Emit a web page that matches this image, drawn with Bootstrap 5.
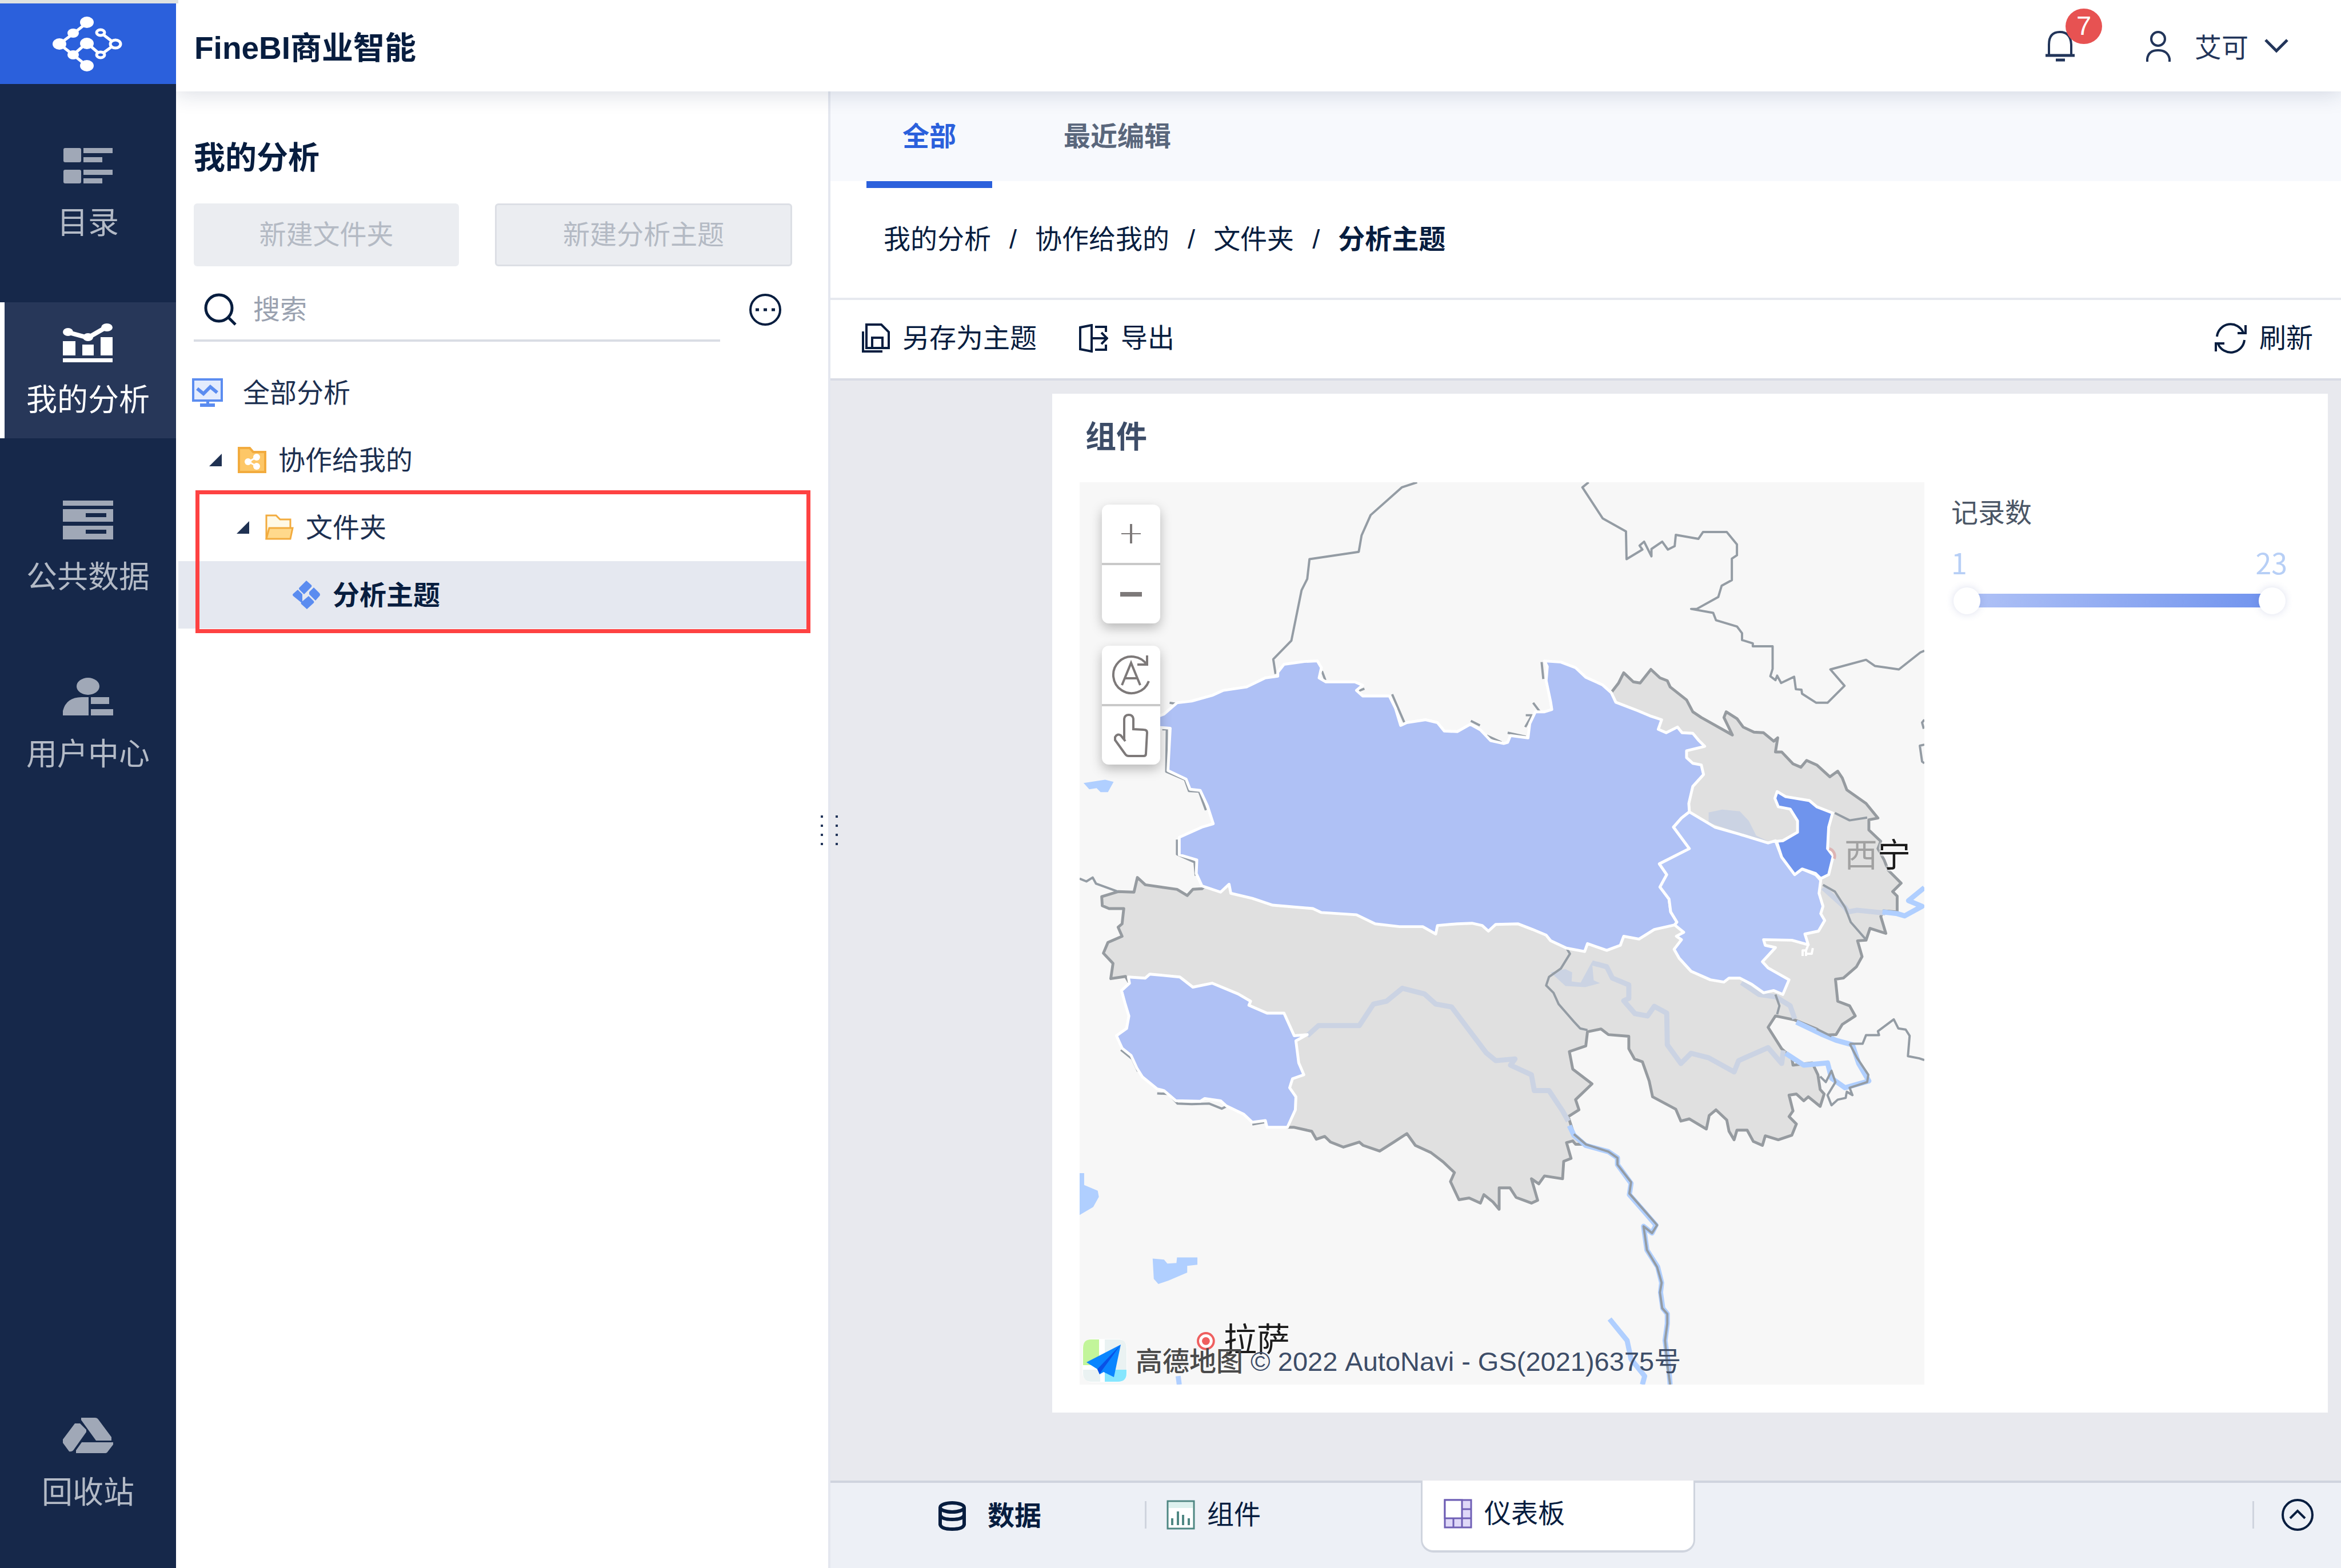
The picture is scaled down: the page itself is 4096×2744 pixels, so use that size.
<!DOCTYPE html>
<html lang="zh-CN">
<head>
<meta charset="utf-8">
<meta name="viewport" content="width=device-width, initial-scale=1">
<title>FineBI商业智能</title>
<link href="https://cdn.jsdelivr.net/npm/bootstrap@5.3.0/dist/css/bootstrap.min.css" rel="stylesheet">
<style>
  :root { --ink:#071d3f; --navy:#16284a; --blue:#2b60dc; --line:#e6e9ef; }
  body { font-family:"Liberation Sans","Noto Sans CJK SC",sans-serif; font-size:47px; line-height:60px; color:var(--ink); background:#fff; overflow:hidden; }
  svg { display:block; flex:none; }
  button { font:inherit; color:inherit; background:none; border:0; padding:0; }
  a { color:inherit; text-decoration:none; }
  .ic { fill:none; stroke:currentColor; stroke-width:4; }

  .rail { width:308px; flex:none; background:var(--navy); color:#b3bac6; z-index:5; }
  .rail-strip { height:6px; background:#dfe2e1; margin-right:-4px; }
  .rail-logo { height:141px; background:var(--blue); }
  .rail-nav { padding-top:72px; gap:72px; }
  .rail-link { height:238px; padding-top:35px; gap:34px; font-size:54px; border-left:8px solid transparent; border-right:8px solid transparent; white-space:nowrap; }
  .rail-link.active { background:#273759; color:#fff; border-left-color:#fff; border-right-color:#273759; }
  .rail-foot { padding-bottom:65px; }

  .topbar { height:160px; flex:none; background:#fff; box-shadow:0 4px 36px rgba(20,40,80,.16); z-index:3; padding:8px 92px 0 32px; }
  .brand { font-size:55px; font-weight:700; }
  .bell { margin-right:125px; color:#22355a; }
  .bell-count { left:35px; top:-39px; width:64px; height:62px; border-radius:50%; background:#e75252; color:#fff; font-size:47px; line-height:60px; }
  .topbar > button { margin-bottom:6px; }
  .user { gap:42px; color:#22355a; }
  .user-name { margin:6px -14px 0 0; }

  .side { width:1145px; flex:none; border-right:4px solid #e4e7ef; padding-top:86px; }
  .side-head { padding-left:31px; }
  .side h1 { font-size:55px; line-height:60px; font-weight:700; margin:0 0 50px; }
  .new-btn { height:110px; border-radius:6px; background:#ebedf1; border:3px solid #ebedf1; color:#b4bac4; }
  .new-btn.wide { border-color:#dcdfe5; }
  .w-a { width:464px; margin-right:63px; }
  .w-b { width:520px; }
  .finder { width:921px; height:108px; border-bottom:4px solid #d9dde4; padding-left:18px; gap:26px; margin-right:51px; }
  .finder input { border:0; outline:0; background:none; width:100%; color:var(--ink); }
  .finder input::placeholder { color:#9aa2b0; opacity:1; }
  .more { margin-bottom:28px; }
  .tree { margin:30px 31px 0 4px; color:#1c2f50; }
  .node { height:118px; }
  .node span { padding-top:2px; }
  .node.l0 { padding-left:24px; gap:35px; }
  .node.l1 { padding-left:54px; }
  .node.l2 { padding-left:102px; }
  .node.l3 { padding-left:199px; background:#e5e8f0; color:var(--ink); font-weight:700; }
  .twig { width:22px; height:22px; margin-right:28px; background:#1f3152; clip-path:polygon(100% 0,100% 100%,0 100%); flex:none; }
  .node-text { margin-left:21px; }
  .hilite { left:30px; top:230px; right:0; height:250px; border:7px solid #fe4242; pointer-events:none; }
  .grip { right:-17px; top:1267px; width:30px; z-index:2; }

  .tabs { height:157px; flex:none; background:#f7f9fd; padding-left:63px; gap:62px; font-weight:700; color:#5a677c; }
  .tabs button { padding:0 63px; position:relative; font-weight:700; }
  .tabs .on { color:var(--blue); }
  .tabs .on::after { content:""; position:absolute; left:0; right:0; bottom:-12px; height:12px; background:var(--blue); }
  .crumbs { height:208px; flex:none; border-bottom:4px solid var(--line); padding-left:93px; }
  .breadcrumb { --bs-breadcrumb-item-padding-x:32px; --bs-breadcrumb-divider-color:var(--ink); --bs-breadcrumb-item-active-color:var(--ink); --bs-breadcrumb-font-size:47px; margin:0; }
  .breadcrumb-item::before { font-weight:400; }
  .tools { height:141px; flex:none; border-bottom:4px solid #d9dce5; padding:0 49px 3px 55px; gap:74px; }
  .tools button { gap:22px; }

  .canvas { background:#e8e9ee; padding:23px 23px 119px 388px; min-height:0; }
  .board { background:#fff; padding:0 74px 49px 48px; height:100%; }
  .board h2 { font-size:54px; line-height:152px; font-weight:700; color:#3d4d68; margin:0; padding:0 0 3px 10px; }
  .map { width:1478px; flex:none; background:#f7f7f7; overflow:hidden; }
  .map-btns { left:39px; width:102px; border-radius:12px; background:#fff; box-shadow:0 8px 20px rgba(0,0,0,.26); color:#7d7979; }
  .map-btns button { height:102px; width:100%; }
  .map-btns button + button { border-top:4px solid #c9c9c9; height:106px; }
  .zoomers { top:39px; } .movers { top:286px; }
  .city { font-size:58px; line-height:70px; color:#1c1c1c; text-shadow:0 0 4px #fff,0 0 4px #fff,0 0 4px #fff; white-space:nowrap; }
  .xining { left:1338px; top:618px; } .xining span { color:#a1a1a1; text-shadow:none; }
  .lhasa { left:252px; top:1466px; }
  .credit { left:5px; bottom:4px; gap:15px; color:#3d4d68; white-space:nowrap; }
  .credit div { padding-top:4px; }
  .credit b { font-weight:500; color:#4a4a4a; }
  .legend { padding:24px 0 0 47px; color:#4b5666; }
  .ends { color:#b7cff6; font-size:50px; line-height:50px; padding:30px 0 4px; font-family:"Noto Sans CJK SC",sans-serif; margin-right:-3px; }
  .span-box { height:47px; margin:16px 0 0 4px; }
  .span-box::before { content:""; position:absolute; left:23px; right:23px; top:11px; height:24px; background:linear-gradient(90deg,#b0c2f6,#7093ee); }
  .span-box input { position:absolute; left:0; top:0; width:100%; height:47px; margin:0; appearance:none; background:none; pointer-events:none; }
  .span-box input::-webkit-slider-thumb { appearance:none; width:47px; height:47px; border-radius:50%; background:#fff; box-shadow:0 0 14px rgba(60,80,160,.18); pointer-events:auto; }

  .dock { height:153px; flex:none; background:#edf0f6; border-top:4px solid #cfd4de; padding:0 48px 0 188px; }
  .dock > * { height:112px; }
  .dock .bar { width:3px; height:48px; background:#cfd4de; margin-top:32px; }
  .dock .data { gap:37px; margin-right:181px; font-weight:700; padding-top:4px; }
  .dock .parts { gap:21px; margin:0 280px 0 35px; }
  .dock .dash { width:480px; height:126px; margin-top:-4px; padding:0 0 6px 37px; gap:21px; background:#fff; border:solid #cfd4de; border-width:0 3px 4px; border-radius:0 0 22px 22px; }
</style>
<script src="https://cdn.jsdelivr.net/npm/bootstrap@5.3.0/dist/js/bootstrap.bundle.min.js"></script>
</head>
<body>
<div class="d-flex vh-100">

  <aside class="rail d-flex flex-column position-relative">
    <div class="rail-strip"></div>
    <a href="#" class="rail-logo d-flex justify-content-center align-items-center" aria-label="FineBI">
      <svg width="124" height="98" viewBox="0 0 124 98" fill="#fff" stroke="#fff" stroke-width="5">
        <path fill="none" d="M60 12 36 31 12 49 36 68 60 87M36 68 60 47 84 68 110 49 84 29"/>
        <g stroke="none"><ellipse cx="60" cy="11" rx="12" ry="10"/><ellipse cx="36" cy="30" rx="10" ry="8"/><ellipse cx="12" cy="49" rx="12" ry="10"/><ellipse cx="36" cy="68" rx="10" ry="8"/><ellipse cx="60" cy="87" rx="12" ry="10"/><ellipse cx="60" cy="48" rx="12" ry="10"/></g>
        <g fill="#2b60dc"><ellipse cx="84" cy="29" rx="7" ry="5"/><ellipse cx="110" cy="49" rx="9" ry="7"/><ellipse cx="84" cy="68" rx="7" ry="5"/></g>
      </svg>
    </a>
    <nav class="rail-nav d-flex flex-column flex-grow-1">
      <a href="#" class="rail-link d-flex flex-column align-items-center">
        <svg width="90" height="72" viewBox="0 0 90 72" fill="#a0a8b7"><rect x="2" y="5" width="31" height="25" rx="3"/><rect x="37" y="5" width="51" height="9"/><rect x="37" y="21" width="33" height="9"/><rect x="2" y="43" width="31" height="24" rx="3"/><rect x="37" y="43" width="51" height="9"/><rect x="37" y="58" width="33" height="9"/></svg>
        <span>目录</span>
      </a>
      <a href="#" class="rail-link active d-flex flex-column align-items-center">
        <svg width="90" height="72" viewBox="0 0 90 72" fill="#fff"><rect x="1" y="33" width="22" height="25"/><rect x="35" y="39" width="20" height="19"/><rect x="67" y="26" width="21" height="32"/><rect x="1" y="63" width="87" height="7"/><path d="M8 17 45 27 78 8" fill="none" stroke="#fff" stroke-width="8"/><ellipse cx="10" cy="17" rx="9" ry="7"/><ellipse cx="45" cy="26" rx="9" ry="7"/><ellipse cx="78" cy="9" rx="10" ry="7"/></svg>
        <span>我的分析</span>
      </a>
      <a href="#" class="rail-link d-flex flex-column align-items-center">
        <svg width="90" height="72" viewBox="0 0 90 72" fill="#a0a8b7"><path d="M1 2h88v9H1zM1 17h88v22H1zm40 7v7h36v-7zM1 46h88v24H1zm40 7v7h36v-7z" fill-rule="evenodd"/></svg>
        <span>公共数据</span>
      </a>
      <a href="#" class="rail-link d-flex flex-column align-items-center">
        <svg width="90" height="72" viewBox="0 0 90 72" fill="#a0a8b7"><ellipse cx="45" cy="17" rx="20" ry="15"/><path d="M46 36v32H1V60Q7 36 34 36zM50 36h32v12H50zM50 57h39v11H50z"/></svg>
        <span>用户中心</span>
      </a>
    </nav>
    <div class="rail-foot">
      <a href="#" class="rail-link d-flex flex-column align-items-center">
        <svg width="90" height="72" viewBox="0 0 90 72" fill="#a0a8b7"><path d="M33 5 57 5Q61 5 63 8L86 39V45H59L33 9ZM22 15H31L42 26V30L20 61Q17 65 12 64L1 49V43ZM34 48H89V52L79 65Q78 67 74 67H24V62Z"/></svg>
        <span>回收站</span>
      </a>
    </div>
  </aside>

  <div class="d-flex flex-column flex-grow-1">
    <header class="topbar d-flex align-items-center position-relative">
      <div class="brand">FineBI商业智能</div>
      <button class="bell position-relative ms-auto" aria-label="消息">
        <svg class="ic" width="51" height="54" viewBox="0 0 51 54"><path d="M6 42V24Q6 2 25 2T45 24V42" /><path d="M0 43H51M18 51H34" stroke-width="5"/></svg>
        <span class="bell-count position-absolute text-center">7</span>
      </button>
      <button class="user d-flex align-items-center" aria-label="艾可">
        <svg class="ic" width="43" height="54" viewBox="0 0 43 54"><circle cx="21" cy="14" r="12"/><path d="M2 54V49Q4 34 21 34T41 49V54"/></svg>
        <span class="user-name">艾可</span>
        <svg class="ic" width="42" height="26" viewBox="0 0 42 26"><path d="M2 2 21 21 40 2" stroke-width="5"/></svg>
      </button>
    </header>

    <div class="d-flex flex-grow-1" style="min-height:0">
      <section class="side position-relative">
        <div class="side-head">
          <h1>我的分析</h1>
          <div class="d-flex">
            <button class="new-btn w-a" disabled>新建文件夹</button>
            <button class="new-btn wide w-b" disabled>新建分析主题</button>
          </div>
          <div class="d-flex align-items-end pt-4">
            <label class="finder d-flex align-items-center">
              <svg class="ic" width="58" height="58" viewBox="0 0 58 58" style="stroke-width:5"><circle cx="26" cy="26" r="23"/><path d="M42 42 55 55"/></svg>
              <input type="text" placeholder="搜索" aria-label="搜索">
            </label>
            <button aria-label="更多" class="more">
              <svg class="ic" width="56" height="56" viewBox="0 0 56 56"><circle cx="28" cy="28" r="26"/><path d="M11 28H17M25 28H31M39 28H45" stroke-width="5"/></svg>
            </button>
          </div>
        </div>
        <div class="tree position-relative">
          <a href="#" class="node l0 d-flex align-items-center">
            <svg width="54" height="50" viewBox="0 0 54 50"><rect x="2" y="2" width="50" height="37" fill="#e4ecfd" stroke="#5b8cf0" stroke-width="4"/><path d="M9 18 20 27 32 15 44 25" fill="none" stroke="#5b8cf0" stroke-width="6"/><path d="M25 40h5v4h10v6H14v-6h11z" fill="#5b8cf0"/></svg>
            <span>全部分析</span>
          </a>
          <a href="#" class="node l1 d-flex align-items-center">
            <i class="twig"></i>
            <svg width="50" height="46" viewBox="0 0 50 46"><path d="M2 2H21L27 9H48V44H2Z" fill="#fdc767" stroke="#f2ab3e" stroke-width="4"/><path d="M33 18 19 26 33 34" fill="none" stroke="#fff" stroke-width="3"/><g fill="#fff"><circle cx="18" cy="26" r="6"/><circle cx="33" cy="18" r="6"/><circle cx="33" cy="34" r="6"/></g></svg>
            <span class="node-text">协作给我的</span>
          </a>
          <a href="#" class="node l2 d-flex align-items-center">
            <i class="twig"></i>
            <svg width="50" height="46" viewBox="0 0 50 46" stroke="#f2ab3e" stroke-width="3"><path d="M2 43V2H19L26 9H44V24" fill="#fff9e6"/><path d="M7 24H48L44 43H2Z" fill="#ffd98c"/></svg>
            <span class="node-text">文件夹</span>
          </a>
          <a href="#" class="node l3 d-flex align-items-center">
            <svg width="50" height="50" viewBox="0 0 50 50" fill="#5b8cf0"><path d="M25 0 34 8Q35 10 34 11L21 24 13 16Q11 14 13 12ZM10 16 18 24V40L2 27Q0 25 2 23ZM38 12 48 22Q50 25 48 27L41 35 30 24V20ZM29 27 38 36Q39 38 38 39L26 50 16 41Q15 40 16 38Z"/></svg>
            <span class="node-text">分析主题</span>
          </a>
          <div class="hilite position-absolute"></div>
        </div>
        <div class="grip position-absolute">
          <svg width="30" height="54" viewBox="0 0 30 54" fill="#22355a"><path d="M0 0h4v4H0zM26 0h4v4h-4zM0 16h4v4H0zM26 16h4v4h-4zM0 32h4v4H0zM26 32h4v4h-4zM0 48h4v4H0zM26 48h4v4h-4z"/></svg>
        </div>
      </section>

      <main class="d-flex flex-column flex-grow-1">
        <div class="tabs d-flex">
          <button class="on">全部</button>
          <button>最近编辑</button>
        </div>
        <nav class="crumbs d-flex align-items-center" aria-label="breadcrumb">
          <ol class="breadcrumb">
            <li class="breadcrumb-item"><a href="#">我的分析</a></li>
            <li class="breadcrumb-item"><a href="#">协作给我的</a></li>
            <li class="breadcrumb-item"><a href="#">文件夹</a></li>
            <li class="breadcrumb-item active" aria-current="page"><strong>分析主题</strong></li>
          </ol>
        </nav>
        <div class="tools d-flex align-items-center">
          <button class="d-flex align-items-center">
            <svg class="ic" width="49" height="52" viewBox="0 0 49 52"><path d="M8 2H34L47 15V43H8ZM18 43V25H36V43M2 14V49H36"/></svg>另存为主题
          </button>
          <button class="d-flex align-items-center">
            <svg class="ic" width="51" height="50" viewBox="0 0 51 50"><path d="M22 2 2 6V44L22 48ZM28 5H47V14M28 45H47V36M24 25H48M39 15 49 25 39 35"/></svg>导出
          </button>
          <button class="d-flex align-items-center ms-auto">
            <svg class="ic" width="56" height="54" viewBox="0 0 56 54"><path d="M4 24A24 24 0 0 1 50 17M52 30A24 24 0 0 1 6 37M54 4V18H40M2 50V36H17"/></svg>刷新
          </button>
        </div>

        <div class="canvas flex-grow-1">
          <div class="board d-flex flex-column">
            <h2>组件</h2>
            <div class="d-flex flex-grow-1">
              <div class="map position-relative">
                <svg class="position-absolute top-0 start-0 w-100 h-100" viewBox="1907 852 1492 1596" preserveAspectRatio="none" fill="none" stroke-linejoin="round">
                  <!-- lakes and rivers beyond the province -->
                  <g fill="#b0cfff"><path d="M1914 1384 1952 1378 1967 1382 1957 1400H1944L1937 1393 1924 1395ZM1907 2074H1915V2095L1939 2105 1941 2116 1931 2134 1907 2148ZM2036 2225 2056 2227 2062 2234 2078 2233 2079 2223H2115V2236L2097 2238V2250L2064 2264 2046 2270 2038 2261Z"/></g>
                  <!-- province -->
                  <path fill="#e0e0e0" stroke="#969ba0" stroke-width="5" d="M2846 1224 2859 1207 2868 1189 2885 1205 2897 1207 2916 1183 2932 1198 2945 1203 2950 1214 2979 1237 2990 1258 3005 1268 3060 1299 3045 1268 3049 1258 3068 1270 3079 1285 3098 1294 3115 1295 3133 1310 3140 1304 3136 1329 3147 1329 3167 1350 3181 1356 3191 1344 3209 1352 3232 1373 3246 1363 3254 1375 3262 1396 3296 1420 3317 1446 3301 1449V1467L3322 1487 3317 1500 3328 1520 3335 1538 3358 1561 3343 1576 3351 1584V1612L3327 1610 3322 1620 3331 1650 3303 1641 3296 1662 3281 1663 3289 1691 3279 1709 3256 1729 3242 1731 3246 1770 3267 1778 3277 1796 3254 1811 3243 1829 3222 1830 3209 1819 3170 1803 3136 1796 3123 1816 3147 1854 3165 1870 3167 1883 3201 1879 3211 1900 3215 1926 3222 1934 3215 1956 3194 1939 3186 1946 3173 1934 3160 1936 3167 1964 3160 1974 3173 1987 3165 2007 3141 2015 3118 2008 3113 2025 3097 2018 3086 1998H3068L3063 2015 3054 2000 3050 1980 3031 1962 3019 1972 3014 1996 2984 1978 2969 1982 2960 1961 2919 1939 2913 1911 2901 1877 2887 1872 2877 1854V1832L2841 1829 2828 1819 2804 1824 2801 1849 2772 1859 2778 1890 2812 1916 2783 1944 2789 1962 2770 1974 2780 2005 2801 2023H2783L2778 2017 2767 2020 2775 2048 2762 2053 2760 2084 2728 2079 2718 2093 2705 2084 2716 2122 2705 2127 2678 2117 2667 2100H2648V2138L2637 2125 2621 2112 2615 2127 2595 2118 2577 2121 2562 2089 2569 2073 2549 2054 2528 2038 2500 2025 2485 2004 2462 2019 2437 2035 2408 2025 2401 2019 2373 2028 2350 2019 2340 2009 2325 2014 2317 2000 2286 1993 2274 1993 2150 1850 2020 1780 1988 1726 1962 1730 1966 1703 1949 1685 1957 1666 1982 1655 1975 1639 1982 1633 1985 1606H1959L1947 1601 1946 1585 1975 1576 2003 1577 2009 1551 2023 1564 2079 1572 2097 1583 2107 1572 2123 1571 2200 1500 2800 1400Z"/>
                  <!-- water inside the province -->
                  <g fill="#cbd3e3"><path d="M3018 1436 3042 1431 3073 1434 3089 1451 3102 1477 3123 1487 3071 1472 3018 1454ZM2739 1719 2765 1713 2777 1719 2776 1735 2792 1737 2812 1700 2815 1733 2826 1738 2800 1745 2765 1743Z"/></g>
                  <g stroke="#cbd3e3" stroke-width="9"><path d="M2309 1831 2329 1813H2401L2426 1775 2449 1770 2477 1747 2516 1757 2536 1775 2564 1780 2625 1861 2642 1875 2676 1872 2668 1883 2705 1900 2710 1928H2736L2760 1964 2770 1982M2812 1702 2838 1709 2848 1729 2877 1741V1765L2868 1769 2888 1792 2910 1796 2922 1779 2944 1791 2945 1847 2969 1880 2987 1862 3018 1870 3063 1895 3071 1875 3123 1852 3147 1880 3150 1857M3220 1569 3259 1604 3264 1612 3280 1609 3330 1614M3076 1737 3107 1758 3136 1762 3162 1778 3170 1801"/></g>
                  <g stroke="#b0cfff" stroke-width="9"><path d="M3325 1612 3351 1615 3364 1619 3395 1602 3371 1592 3399 1569M3173 1807 3217 1828 3243 1839 3272 1847 3283 1880 3301 1911 3259 1923 3235 1906 3228 1879 3186 1883 3154 1862M2772 1990 2780 2007 2801 2025 2841 2036 2857 2047V2059L2881 2092 2878 2112 2925 2166 2918 2180 2903 2168 2909 2210 2928 2240 2935 2268 2933 2285 2937 2313 2945 2323V2340L2941 2370 2947 2413 2950 2448M2843 2332 2874 2370 2881 2403 2905 2433 2901 2448M2081 2433 2083 2448"/></g>
                  <!-- neighbouring borders -->
                  <g stroke="#949ca4" stroke-width="4"><path d="M2503 852 2476 861 2421 910 2405 946 2400 975 2313 988 2309 1023 2299 1043 2281 1132 2249 1165 2253 1191M2806 852 2795 861 2831 916 2872 939 2873 988 2901 971 2896 964 2904 957 2917 983V970L2936 957 2946 971 2958 965 2960 945 3000 952 3008 940H3050L3068 962V981L3059 987V1025L3041 1035 3035 1055 2997 1076H2987L3026 1083 3031 1096 3068 1107 3077 1119V1131L3096 1137V1142H3131V1182L3127 1195 3136 1202 3139 1194 3146 1207 3169 1196 3172 1218 3182 1219 3183 1226 3208 1242H3228L3258 1212 3233 1183 3296 1166 3312 1177 3354 1183 3392 1153 3399 1150M3399 1272 3395 1277 3398 1288M3399 1316 3391 1318 3395 1346 3399 1349M1907 1553 1919 1558 1930 1551 1936 1562 1975 1576M2767 1676 2773 1686 2757 1712 2736 1727 2731 1742 2744 1755 2753 1775 2780 1806 2791 1818 2804 1821M3241 1437 3267 1450 3298 1445M3220 1564 3241 1576 3259 1604 3269 1630 3296 1661M3136 1758 3143 1778 3139 1793M3209 1819 3235 1832M3267 1845 3280 1870 3300 1900 3298 1913 3267 1923 3272 1936 3262 1930 3260 1941 3246 1944 3235 1954 3228 1936 3242 1913 3235 1893 3225 1913 3215 1903M3267 1845H3290L3296 1830H3319L3317 1823 3345 1802 3353 1818 3366 1820 3373 1831 3370 1867 3390 1871 3399 1874M2780 2005 2801 2023 2841 2036 2857 2047V2059L2881 2090 2878 2110 2927 2166 2918 2180 2903 2168 2909 2210 2927 2240 2935 2268 2932 2285 2936 2313 2945 2323V2340L2941 2370 2945 2413 2950 2448"/></g>
                  <g stroke="#949ca4" stroke-width="4"><path d="M2459 1227 2481 1278M2335 1186 2341 1202M2400 1221 2410 1217M2598 1274 2614 1282M2626 1300 2652 1312M2066 1242 2078 1244M2053 1289H2061L2060 1364 2093 1378 2100 1398 2118 1399 2130 1432M2723 1170 2726 1200M2708 1242 2720 1258M2695 1264H2706L2694 1285M2663 1295 2695 1302M2079 1484V1510L2110 1524 2112 1548M2044 1933 2064 1934 2080 1951 2105 1952 2136 1951 2158 1960 2166 1956M2212 1988 2233 1984M1980 1856 2000 1872 2010 1894"/></g>
                  <!-- data regions -->
                  <g stroke="#fff" stroke-width="5">
                    <path fill="#afc1f5" d="M2040 1268 2056 1262 2079 1242 2105 1239 2141 1229 2161 1220 2202 1214 2235 1198 2257 1195V1188L2268 1174 2304 1169 2327 1168 2334 1180 2330 1198 2342 1205H2393L2407 1211 2396 1220 2407 1230H2454L2465 1252 2474 1282 2485 1277 2518 1272 2539 1277 2551 1292 2574 1293 2597 1280 2615 1290 2633 1309 2656 1314 2663 1312 2668 1300 2699 1304 2702 1279 2712 1258H2728L2741 1254 2739 1241 2731 1203 2733 1178 2728 1168 2757 1170 2783 1180 2801 1197 2830 1210 2846 1224 2854 1241 2893 1256 2914 1265 2935 1272 2929 1289 2943 1295 2963 1285 2971 1295 2990 1296 3000 1308 3011 1319 2979 1327V1339L2990 1349 3005 1352 3009 1369 2990 1390 2983 1420 2984 1435 2970 1446 2956 1462 2984 1500 2931 1527 2944 1546 2932 1568 2948 1589 2951 1612 2962 1630 2958 1635 2922 1643 2895 1660 2868 1655 2862 1671 2838 1680 2804 1668 2799 1682 2767 1676 2739 1663 2731 1653 2707 1643 2681 1633 2642 1634 2629 1646 2618 1636 2600 1632 2574 1633 2539 1636 2536 1651 2513 1638H2472L2429 1633 2396 1617 2334 1613 2319 1606 2248 1600 2212 1588 2174 1579 2171 1563 2156 1577 2123 1566 2113 1544 2114 1520 2083 1511V1480L2123 1462 2143 1456 2133 1425 2120 1397 2102 1395 2095 1377 2063 1362 2067 1287 2040 1285Z"/>
                    <path fill="#b4c6f7" d="M2984 1435 3029 1462 3071 1474 3123 1490 3136 1486 3147 1515 3170 1546 3183 1536 3207 1546 3216 1556 3213 1579 3220 1602 3216 1615 3223 1627 3212 1646 3188 1651 3194 1670 3165 1662 3115 1661 3118 1671 3136 1675 3113 1700 3123 1711 3160 1732 3149 1758 3133 1751 3115 1755 3094 1740 3073 1729H3054L3045 1736 3021 1732 2987 1717 2966 1694 2957 1678 2970 1661 2961 1655 2974 1648 2958 1635 2962 1630 2951 1612 2948 1589 2932 1568 2944 1546 2931 1527 2984 1500 2956 1462 2970 1446Z"/>
                    <path stroke-width="4" d="M3184 1690V1680H3190V1690M3190 1680 3194 1670M3192 1686H3200L3202 1676"/>
                    <path fill="#6f94ed" d="M3139 1399 3154 1408 3196 1415 3209 1426 3237 1437 3230 1462 3228 1500 3238 1513 3230 1546 3216 1553 3207 1544 3183 1536 3170 1546 3147 1515 3138 1487 3149 1486 3175 1471V1451L3162 1430 3141 1426 3135 1411Z"/>
                    <path fill="#afc1f5" d="M1993 1727 2023 1729 2031 1722 2084 1727 2107 1745 2141 1738 2187 1757 2209 1770 2206 1777 2238 1791H2268L2286 1831 2309 1829 2289 1840 2294 1879 2303 1900 2283 1907 2278 1923 2289 1939 2288 1962 2274 1993H2238L2235 1981 2212 1984 2197 1970 2166 1955 2156 1946 2128 1942 2120 1947 2077 1946 2056 1928 2044 1925 2018 1904 2008 1888 1998 1866 1982 1853 1972 1831 1990 1818 1994 1796 1987 1773 1981 1751 1995 1738Z"/>
                  </g>
                  <path d="M3231 1500A14 14 0 0 1 3240 1518" stroke="#ddb4b4" stroke-width="5"/>
                  <g stroke="#ef5f5f" stroke-width="4"><circle cx="2130" cy="2371" r="14" fill="#fff"/><circle cx="2130" cy="2371" r="5" fill="#ef5f5f"/></g>
                </svg>
                <div class="xining city position-absolute"><span>西</span>宁</div>
                <div class="lhasa city position-absolute">拉萨</div>
                <div class="credit position-absolute d-flex align-items-center">
                  <svg width="78" height="76" viewBox="0 0 78 76"><rect width="78" height="76" rx="16" fill="#fff"/><path d="M15 1H29V46H1V16Q1 1 15 1Z" fill="#c2f59a"/><path d="M39 1H62Q77 1 77 16V54H39Z" fill="#eaf2f2"/><path d="M1 54H31V75H16Q1 75 1 60Z" fill="#eaf2f2"/><path d="M39 54H77V60Q77 75 62 75H39Z" fill="#86e6fe"/><path d="M67 10 7 41 26 53 30 62 37 58 55 67Z" fill="#0a85ff"/><path d="M67 10 26 53 30 62 35 54Z" fill="#0a52e6"/></svg>
                  <div><b>高德地图</b> © 2022 AutoNavi - GS(2021)6375号</div>
                </div>
                <div class="map-btns zoomers position-absolute">
                  <button class="d-flex align-items-center justify-content-center" aria-label="放大"><svg class="ic" width="34" height="34" viewBox="0 0 34 34"><path d="M17 0V34" /><path d="M0 17H34" stroke-width="2"/></svg></button>
                  <button class="d-flex align-items-center justify-content-center" aria-label="缩小"><svg width="38" height="8" viewBox="0 0 38 8"><rect width="38" height="8" fill="#7d7979"/></svg></button>
                </div>
                <div class="map-btns movers position-absolute">
                  <button class="d-flex align-items-center justify-content-center" aria-label="还原"><svg class="ic" width="68" height="70" viewBox="0 0 68 70"><path d="M62 18A32 32 0 1 0 65 46M62 1V17H45M18 53 34 14 50 53M23 41H45" stroke-width="4"/></svg></button>
                  <button class="d-flex align-items-center justify-content-center" aria-label="拖动"><svg class="ic" width="60" height="76" viewBox="0 0 60 76"><path d="M20 48 12 38Q6 34 2 41V46L20 71Q22 74 26 74H52Q56 74 56 70L58 33Q58 28 52 28L34 27V9Q33 2 26 2T18 9V46"/></svg></button>
                </div>
              </div>

              <div class="legend flex-grow-1">
                <div>记录数</div>
                <div class="ends d-flex justify-content-between"><span>1</span><span>23</span></div>
                <div class="span-box position-relative">
                  <input type="range" min="1" max="23" value="1" aria-label="最小值">
                  <input type="range" min="1" max="23" value="23" aria-label="最大值">
                </div>
              </div>
            </div>
          </div>
        </div>

        <div class="dock d-flex">
          <button class="data d-flex align-items-center">
            <svg width="50" height="52" viewBox="0 0 50 52" fill="none" stroke="currentColor" stroke-width="6"><ellipse cx="25" cy="11" rx="21" ry="8"/><path d="M4 11V41Q6 49 25 49T46 41V11M4 24Q6 32 25 32T46 24"/></svg>数据
          </button>
          <div class="bar"></div>
          <button class="parts d-flex align-items-center">
            <svg width="50" height="52" viewBox="0 0 50 52"><rect x="2" y="2" width="46" height="48" fill="#fff" stroke="#4f8783" stroke-width="3"/><rect x="4" y="4" width="42" height="10" fill="#ddf1ee"/><path d="M10 44V32M20 44V20M29 44V26M39 44V32" stroke="#4f8783" stroke-width="4"/></svg>组件
          </button>
          <button class="dash d-flex align-items-center">
            <svg width="50" height="52" viewBox="0 0 50 52" stroke="#6f5fb5" stroke-width="3"><rect x="2" y="2" width="46" height="48" fill="#dfd8f8"/><rect x="2" y="2" width="30" height="32" fill="#fff"/><path d="M32 34H48M32 18H48M17 34V50M32 34V50"/></svg>仪表板
          </button>
          <div class="bar ms-auto"></div>
          <button class="d-flex align-items-center ms-5" aria-label="展开">
            <svg class="ic" width="56" height="56" viewBox="0 0 56 56"><circle cx="28" cy="28" r="26"/><path d="M15 34 28 21 41 34"/></svg>
          </button>
        </div>
      </main>
    </div>
  </div>
</div>
</body>
</html>
